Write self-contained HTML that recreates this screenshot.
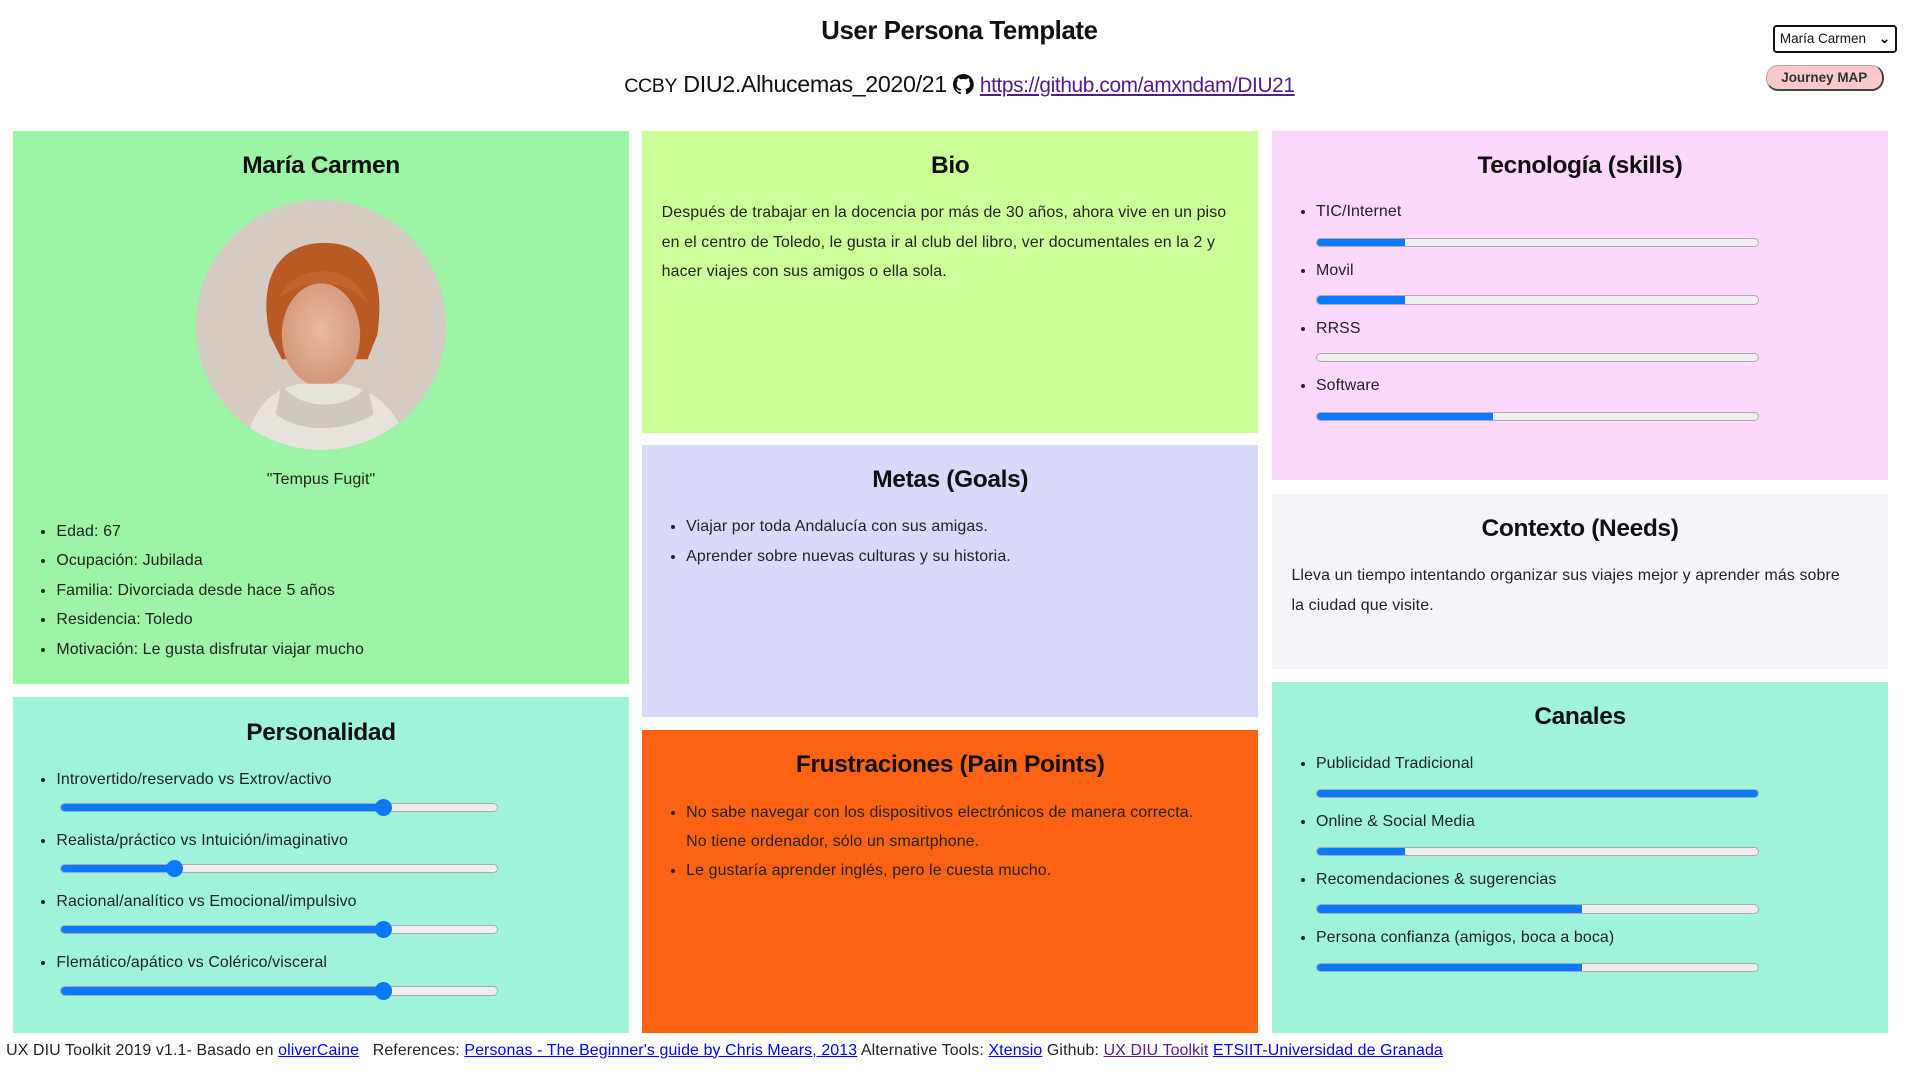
<!DOCTYPE html>
<html><head><meta charset="utf-8">
<style>
html,body{margin:0;padding:0;background:#fff;}
body{width:1567px;height:882px;zoom:1.2253;position:relative;overflow:hidden;font-family:"Liberation Sans",sans-serif;color:#111;}
.a{position:absolute;}
.card{position:absolute;box-sizing:border-box;}
.h{position:absolute;left:0;right:0;text-align:center;font-weight:bold;font-size:20px;letter-spacing:-0.3px;}
.hw{font-family:"Liberation Sans",sans-serif;font-size:13px;letter-spacing:0.1px;color:#222;}
ul{margin:0;padding:0 0 0 22px;}
li{line-height:24px;}
.bar{position:absolute;height:6px;border:1px solid #aaa;background:#eee;border-radius:4px;overflow:hidden;}
.bar i{display:block;height:100%;background:#0a78ff;}
.sl{position:absolute;height:6px;border:1px solid #aaa;background:#eee;border-radius:4px;}
.sl i{position:absolute;left:0;top:0;height:100%;background:#0a78ff;border-radius:4px 0 0 4px;}
.sl b{position:absolute;top:-4px;width:14px;height:14px;border-radius:50%;background:#0a78ff;margin-left:-7px;}
a{color:#00e;}
</style></head><body>
<div class="a" style="left:0;width:1566px;top:14px;text-align:center;font-weight:bold;font-size:21px;letter-spacing:-0.3px">User Persona Template</div>
<div class="a" style="left:0;width:1566px;top:58px;text-align:center;font-size:19px;letter-spacing:-0.3px">
<span style="font-size:16px">CCBY</span> DIU2.Alhucemas_2020/21 <svg width="17" height="17" viewBox="0 0 16 16" style="vertical-align:-2px"><path fill="#111" d="M8 0C3.6 0 0 3.6 0 8c0 3.5 2.3 6.5 5.5 7.6.4.1.5-.2.5-.4v-1.4c-2.2.5-2.7-1-2.7-1-.4-.9-.9-1.2-.9-1.2-.7-.5.1-.5.1-.5.8.1 1.2.8 1.2.8.7 1.2 1.9.9 2.3.7.1-.5.3-.9.5-1.1-1.8-.2-3.6-.9-3.6-4 0-.9.3-1.600.8-2.100-.1-.2-.4-1 .1-2.100 0 0 .7-.2 2.200.8.6-.2 1.300-.3 2-.3s1.400.1 2 .3c1.500-1 2.200-.8 2.200-.8.4 1.100.2 1.900.1 2.100.5.6.8 1.300.8 2.100 0 3.100-1.900 3.700-3.600 3.900.3.3.5.8.5 1.500v2.200c0 .2.1.5.6.4C13.700 14.500 16 11.500 16 8c0-4.400-3.600-8-8-8z"/></svg> <a href="#" style="color:#551a8b;font-size:17px">https://github.com/amxndam/DIU21</a></div>
<div class="a" style="left:1447px;top:20px;height:20px;border:2px solid #111;border-radius:3px;font-size:11px;line-height:20px;padding-left:4px;width:94px">María Carmen <span style="position:absolute;right:4px;font-weight:bold">⌄</span></div>
<div class="a" style="left:1441px;top:53px;width:94px;height:19px;border:1px solid #aaa;border-right:2px solid #444;border-bottom:2px solid #444;border-radius:10px;background:#fbc9c9;font-size:11px;font-weight:bold;color:#333;text-align:center;line-height:19px">Journey MAP</div>

<!-- col1 -->
<div class="card hw" style="left:11px;top:107px;width:502px;height:451px;background:#9df3a6">
<div class="h" style="top:17px;color:#111">María Carmen</div>
<svg class="a" style="left:149px;top:56px" width="204" height="205" viewBox="0 0 204 205">
<defs><clipPath id="c"><ellipse cx="102" cy="102" rx="102" ry="102"/></clipPath>
<radialGradient id="f" cx="0.5" cy="0.45" r="0.5"><stop offset="0" stop-color="#e8b9a0"/><stop offset="1" stop-color="#d59a7e"/></radialGradient></defs>
<g clip-path="url(#c)"><rect width="204" height="205" fill="#d5cbc3"/>
<path d="M60 110 C50 60 70 35 105 35 C140 35 155 60 148 110 L140 130 L70 130Z" fill="#b85a22"/>
<ellipse cx="102" cy="110" rx="32" ry="42" fill="url(#f)"/>
<path d="M68 80 C80 50 130 50 140 85 C125 65 90 62 68 80Z" fill="#c2652a"/>
<path d="M40 205 C45 170 60 155 85 150 L120 150 C145 155 165 170 175 205Z" fill="#e8e2dc"/>
<path d="M70 150 C80 170 125 175 140 150 L145 175 C120 190 85 190 65 175Z" fill="#cfc8c1"/></g></svg>
<div class="a" style="left:0;right:0;top:277px;text-align:center">"Tempus Fugit"</div>
<ul class="a" style="top:315px;left:13px">
<li>Edad: 67</li><li>Ocupación: Jubilada</li><li>Familia: Divorciada desde hace 5 años</li><li>Residencia: Toledo</li><li>Motivación: Le gusta disfrutar viajar mucho</li></ul>
</div>
<div class="card hw" style="left:11px;top:569px;width:502px;height:274px;background:#9ff3da">
<div class="h" style="top:18px;color:#111">Personalidad</div>
<ul class="a" style="top:55px;left:13px"><li>Introvertido/reservado vs Extrov/activo</li></ul>
<div class="sl" style="left:38px;top:86px;width:356px"><i style="width:74%"></i><b style="left:74%"></b></div>
<ul class="a" style="top:105px;left:13px"><li>Realista/práctico vs Intuición/imaginativo</li></ul>
<div class="sl" style="left:38px;top:136px;width:356px"><i style="width:26%"></i><b style="left:26%"></b></div>
<ul class="a" style="top:155px;left:13px"><li>Racional/analítico vs Emocional/impulsivo</li></ul>
<div class="sl" style="left:38px;top:186px;width:356px"><i style="width:74%"></i><b style="left:74%"></b></div>
<ul class="a" style="top:205px;left:13px"><li>Flemático/apático vs Colérico/visceral</li></ul>
<div class="sl" style="left:38px;top:236px;width:356px"><i style="width:74%"></i><b style="left:74%"></b></div>
</div>

<!-- col2 -->
<div class="card hw" style="left:524px;top:107px;width:503px;height:246px;background:#ccff99">
<div class="h" style="top:17px;color:#111">Bio</div>
<div class="a" style="left:16px;right:14px;top:55px;line-height:24px">Después de trabajar en la docencia por más de 30 años, ahora vive en un piso en el centro de Toledo, le gusta ir al club del libro, ver documentales en la 2 y hacer viajes con sus amigos o ella sola.</div>
</div>
<div class="card hw" style="left:524px;top:363px;width:503px;height:222px;background:#d8d9fb">
<div class="h" style="top:17px;color:#111">Metas (Goals)</div>
<ul class="a" style="top:55px;left:14px"><li>Viajar por toda Andalucía con sus amigas.</li><li>Aprender sobre nuevas culturas y su historia.</li></ul>
</div>
<div class="card hw" style="left:524px;top:596px;width:503px;height:247px;background:#fe6314">
<div class="h" style="top:17px;color:#111">Frustraciones (Pain Points)</div>
<ul class="a" style="top:55px;left:14px;right:40px"><li>No sabe navegar con los dispositivos electrónicos de manera correcta. No tiene ordenador, sólo un smartphone.</li><li>Le gustaría aprender inglés, pero le cuesta mucho.</li></ul>
</div>

<!-- col3 -->
<div class="card hw" style="left:1038px;top:107px;width:503px;height:285px;background:#fcd9fc">
<div class="h" style="top:17px;color:#111">Tecnología (skills)</div>
<ul class="a" style="top:54px;left:14px"><li>TIC/Internet</li></ul>
<div class="bar" style="left:36px;top:87px;width:360px"><i style="width:20%"></i></div>
<ul class="a" style="top:102px;left:14px"><li>Movil</li></ul>
<div class="bar" style="left:36px;top:134px;width:360px"><i style="width:20%"></i></div>
<ul class="a" style="top:149px;left:14px"><li>RRSS</li></ul>
<div class="bar" style="left:36px;top:181px;width:360px"><i style="width:0%"></i></div>
<ul class="a" style="top:196px;left:14px"><li>Software</li></ul>
<div class="bar" style="left:36px;top:229px;width:360px"><i style="width:40%"></i></div>
</div>
<div class="card hw" style="left:1038px;top:403px;width:503px;height:143px;background:#f3f5f8">
<div class="h" style="top:17px;color:#111">Contexto (Needs)</div>
<div class="a" style="left:16px;right:30px;top:55px;line-height:24px">Lleva un tiempo intentando organizar sus viajes mejor y aprender más sobre la ciudad que visite.</div>
</div>
<div class="card hw" style="left:1038px;top:557px;width:503px;height:286px;background:#9ff3da">
<div class="h" style="top:17px;color:#111">Canales</div>
<ul class="a" style="top:54px;left:14px"><li>Publicidad Tradicional</li></ul>
<div class="bar" style="left:36px;top:87px;width:360px"><i style="width:100%"></i></div>
<ul class="a" style="top:102px;left:14px"><li>Online &amp; Social Media</li></ul>
<div class="bar" style="left:36px;top:134px;width:360px"><i style="width:20%"></i></div>
<ul class="a" style="top:149px;left:14px"><li>Recomendaciones &amp; sugerencias</li></ul>
<div class="bar" style="left:36px;top:181px;width:360px"><i style="width:60%"></i></div>
<ul class="a" style="top:196px;left:14px"><li>Persona confianza (amigos, boca a boca)</li></ul>
<div class="bar" style="left:36px;top:229px;width:360px"><i style="width:60%"></i></div>
</div>

<div class="a hw" style="left:5px;top:850px;white-space:nowrap;font-size:13px">UX DIU Toolkit 2019 v1.1- Basado en <a href="#">oliverCaine</a> &nbsp; References: <a href="#">Personas - The Beginner's guide by Chris Mears, 2013</a> Alternative Tools: <a href="#">Xtensio</a> Github: <a href="#" style="color:#551a8b">UX DIU Toolkit</a> <a href="#">ETSIIT-Universidad de Granada</a></div>
</body></html>
